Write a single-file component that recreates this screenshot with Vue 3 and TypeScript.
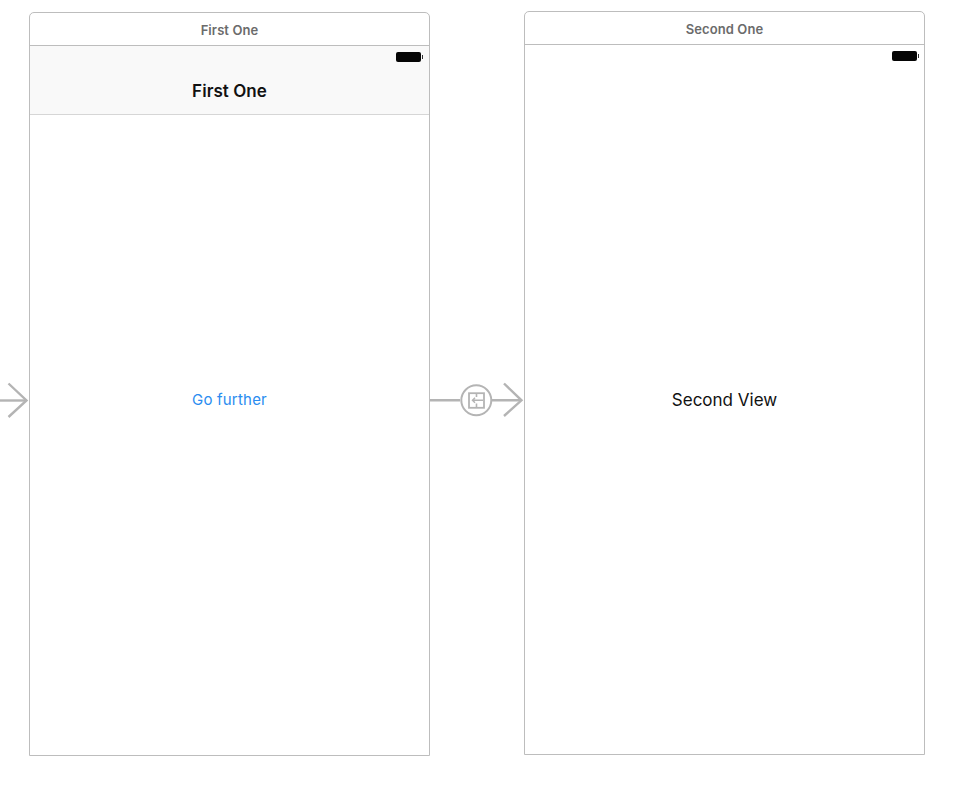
<script setup lang="ts">
interface Scene {
  title: string
  offset: string
}
const first: Scene = { title: 'First One', offset: 'first' }
const second: Scene = { title: 'Second One', offset: 'second' }
</script>

<template>
  <div class="canvas">
    <section class="scene" :class="first.offset">
      <header class="dock">{{ first.title }}</header>
      <div class="nav">
        <div class="status">
          <span class="battery"></span>
        </div>
        <div class="nav-title">{{ first.title }}</div>
      </div>
      <div class="content content-nav">
        <button class="link" type="button">Go further</button>
      </div>
    </section>
    <section class="scene" :class="second.offset">
      <header class="dock">{{ second.title }}</header>
      <div class="status">
        <span class="battery"></span>
      </div>
      <div class="content content-plain">
        <span class="label">Second View</span>
      </div>
    </section>

    <svg class="entry" width="29" height="40" viewBox="0 0 29 40" fill="none" stroke="#b4b4b4" stroke-width="2.4">
      <path d="M0 20.5H26" />
      <path d="M8.5 3.5 L26.5 20.5 L8.5 37" />
    </svg>

    <svg class="segue" width="96" height="40" viewBox="0 0 96 40" fill="none" stroke="#b4b4b4">
      <path d="M1 20.3H31M62 20.3H92" stroke-width="2.4" />
      <path d="M75 3.5 L92.5 20.3 L75 36" stroke-width="2.4" />
      <circle cx="47.3" cy="20.3" r="15" stroke-width="2" fill="#fff" />
      <rect x="40" y="13.2" width="15" height="14.6" stroke-width="1.8" />
      <path d="M47.5 13V17M47.5 23.5V28" stroke-width="1.6" />
      <path d="M54 20.3H43.5M46 17.8L43.5 20.3L46 22.8" stroke-width="1.5" />
    </svg>
  </div>
</template>

<style scoped>
.canvas {
  position: relative;
  display: flex;
  align-items: flex-start;
  gap: 94px;
  width: 958px;
  height: 786px;
  padding-left: 29px;
  box-sizing: border-box;
  background: #fff;
  overflow: hidden;
  font-family: Inter, "Liberation Sans", sans-serif;
}

.scene {
  display: flex;
  flex-direction: column;
  width: 401px;
  height: 744px;
  box-sizing: border-box;
  border: 1px solid #bdbdbd;
  border-radius: 5px 5px 0 0;
  background: #fff;
}

.first {
  margin-top: 12px;
}

.second {
  margin-top: 11px;
}

.dock {
  flex: none;
  height: 32px;
  line-height: 35px;
  border-bottom: 1px solid #bdbdbd;
  text-align: center;
  font-size: 13px;
  font-weight: 600;
  letter-spacing: 0.1px;
  color: #6b6b6b;
}

.nav {
  flex: none;
  height: 69px;
  box-sizing: border-box;
  background: #f9f9f9;
  border-bottom: 1px solid #d6d6d6;
}

.status {
  flex: none;
  display: flex;
  justify-content: flex-end;
  height: 12px;
  padding: 6px 7px 0 0;
}

.nav .status {
  padding-right: 8px;
}

.battery {
  position: relative;
  display: block;
  width: 25px;
  height: 10px;
  border-radius: 2px;
  background: #050505;
}

.battery::after {
  content: "";
  position: absolute;
  right: -2px;
  top: 3px;
  width: 1px;
  height: 4px;
  background: #333;
}

.nav-title {
  margin-top: 16px;
  text-align: center;
  font-size: 17px;
  line-height: 22px;
  font-weight: 600;
  letter-spacing: 0.05px;
  color: #111;
}

.content {
  flex: 1;
  display: flex;
  align-items: center;
  justify-content: center;
}

.content-nav {
  padding-bottom: 70px;
}

.content-plain {
  padding-bottom: 18px;
}

.link {
  margin: 0;
  padding: 0;
  border: 0;
  background: none;
  font: inherit;
  font-size: 15px;
  line-height: 20px;
  letter-spacing: 0.2px;
  color: #2a8cf0;
}

.label {
  font-size: 17px;
  line-height: 20px;
  color: #111;
}

.entry {
  position: absolute;
  left: 0;
  top: 380px;
}

.segue {
  position: absolute;
  left: 429px;
  top: 380px;
}
</style>
